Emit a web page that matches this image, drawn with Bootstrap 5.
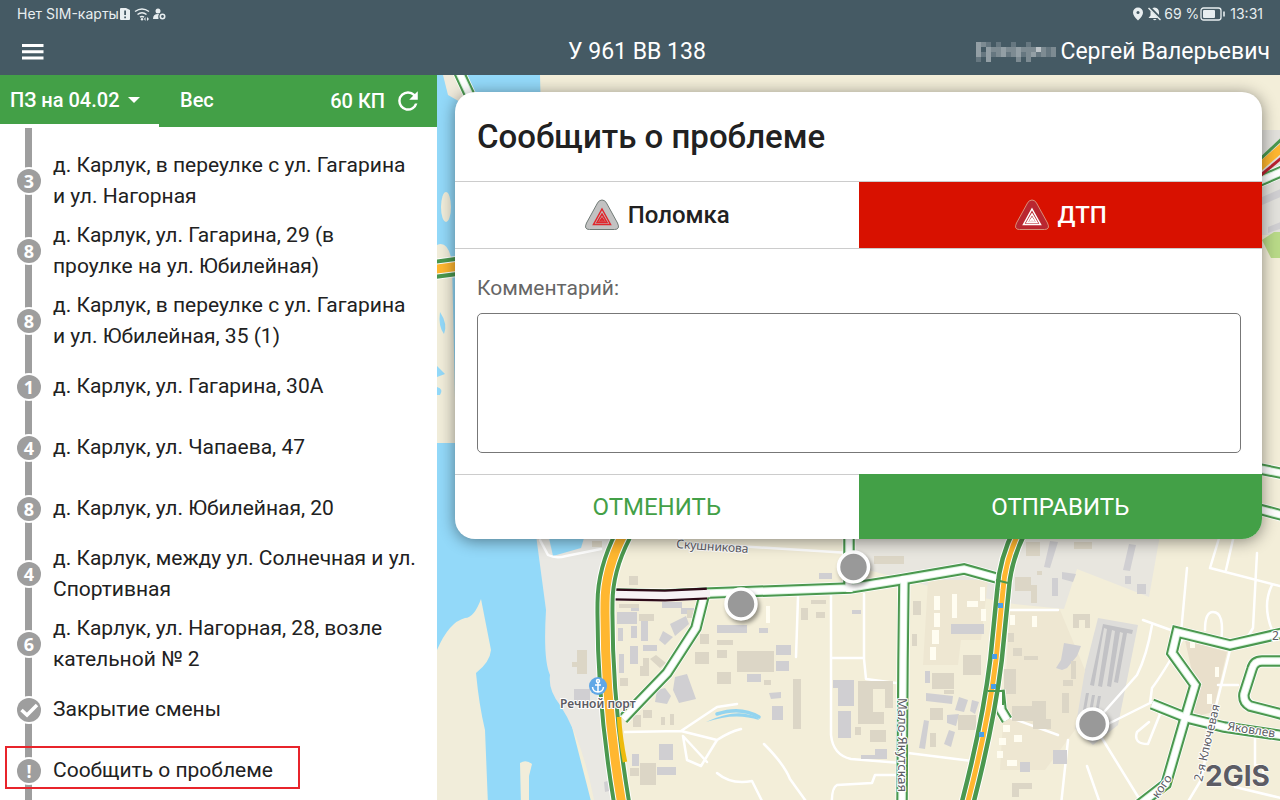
<!DOCTYPE html>
<html lang="ru">
<head>
<meta charset="utf-8">
<meta name="viewport" content="width=device-width, initial-scale=1">
<title>Сообщить о проблеме</title>
<link href="https://cdn.jsdelivr.net/npm/bootstrap@5.3.0/dist/css/bootstrap.min.css" rel="stylesheet">
<style>
  :root { --slate: #455a64; --leaf: #43a047; --rail: #9e9e9e; --alarm: #d81100; }
  body { font-family: Roboto, sans-serif; color: #212121; }
  button { border: 0; background: none; color: inherit; padding: 0; }
  .topbar { background: var(--slate); color: #fff; padding-bottom: 4px; }
  .statusline { font: 14px/20px Inter, sans-serif; color: #e8eef0; padding: 4px 17px; }
  .titleline { padding: 8px 10px 4px 4px; font-size: 23px; line-height: 31px; }
  .menu-button { margin-left: 18px; }
  .side-part { flex: 1 1 0; }
  .route { width: 437px; }
  .route-tabs { background: var(--leaf); height: 52px; font-size: 20px; }
  .route-tabs .chosen { width: 159px; border-bottom: 3px solid #fff; padding-left: 10px; }
  .weight-tab { padding: 0 21px 3px; }
  .point-count { padding-right: 18px; }
  .caret-mark { border: 6px solid transparent; border-top-color: #fff; border-bottom: 0; }
  .stops { font-size: 21px; line-height: 31px; }
  .stop-row { min-height: 61px; padding: 4px 8px 4px 17px;
    background: linear-gradient(var(--rail), var(--rail)) 25px 0 / 7px 100% no-repeat; }
  .stop-row.cut { min-height: 19px; padding: 0; border-top: 1px solid #fff; }
  .node { width: 24px; height: 24px; background: var(--rail); color: #fff; font: 700 18px/24px "Open Sans", sans-serif; box-shadow: 0 0 0 2px #fff; }
  .marker-frame { position: absolute; inset: 6px auto auto 5px; width: 295px; height: 43px; border: 2px solid #e8242b; pointer-events: none; }
  .map-area { background: #f3eed9; }
  .map-art { position: absolute; inset: 0; width: 100%; height: 100%; }
  .problem { margin: 17px 18px 0; border-radius: 20px; background: #fff; box-shadow: 0 2px 16px rgba(0, 0, 0, .45); overflow: hidden; }
  .problem h1 { font-size: 33px; line-height: 40px; padding: 25px 22px 24px; }
  .kinds { height: 68px; border: solid #ccc; border-width: 1px 0; font-size: 24px; }
  .kinds .danger-kind { background: var(--alarm); color: #fff; }
  .note { padding: 24px 21px 21px 22px; }
  .note label { font-size: 21px; line-height: 31px; color: #666; }
  .note textarea { height: 140px; border: 1px solid #777; border-radius: 5px; resize: none; margin-top: 9px; }
  .choices { height: 65px; font-size: 24px; }
  .choices .cancel { color: var(--leaf); border-top: 1px solid #ccc; }
  .choices .send { background: var(--leaf); color: #fff; }
  .map-art text { font-family: "Noto Sans", sans-serif; fill: #5c5c64; paint-order: stroke; stroke: #fff; stroke-width: 2px; stroke-linejoin: round; }
</style>
</head>
<body class="vh-100 overflow-hidden d-flex flex-column">

<header class="topbar">
  <div class="statusline d-flex align-items-center">
    <span>Нет SIM-карты</span>
    <svg width="48" height="16" viewBox="0 0 48 16" fill="#e8eef0" aria-hidden="true">
      <path d="M2 2h5l4 2v9q0 1-1 1H2q-1 0-1-1V3q0-1 1-1z"/><path d="M5.2 4.5h1.8v4.500H5.200zM5.200 10.500h1.800v1.800H5.200z" fill="#455a64"/>
      <g fill="none" stroke="#e8eef0" stroke-width="1.500"><path d="M16 5.500q7-5 14 0M18.500 8.500q4.500-3.500 9 0M21 11.200q2-1.500 4 0"/></g>
      <circle cx="23" cy="13.300" r="1.200"/><path d="M26.500 11v4l-1.500-2zM28 11v4l2-2z"/>
      <circle cx="39" cy="5" r="2.500"/><path d="M34 13q0-5 5-5l1 0q-1.500 2-.5 5z"/><circle cx="43.500" cy="10.500" r="2.200" fill="none" stroke="#e8eef0" stroke-width="1.600"/>
    </svg>
    <span class="ms-auto d-flex align-items-center">
      <svg width="32" height="16" viewBox="0 0 32 16" aria-hidden="true">
        <path d="M6 1.500a5 5 0 0 1 5 5q0 3.500-5 8-5-4.500-5-8a5 5 0 0 1 5-5z" fill="#e8eef0"/><circle cx="6" cy="6.500" r="1.500" fill="#455a64"/>
        <path d="M22.500 1.500q4.500.5 4.500 5v3l2 2.500H16.500l2-2.500v-3q0-4.500 4-5zM21 13h3.500q-1.700 2.500-3.500 0z" fill="#e8eef0"/>
        <path d="M17 1l12 12" stroke="#455a64" stroke-width="3"/><path d="M16.500 2l12 12" stroke="#e8eef0" stroke-width="1.400"/>
      </svg>
      <span>69 %</span>
      <svg class="me-1" width="27" height="14" viewBox="-1 0 27 14" aria-hidden="true">
        <rect x="1" y="1" width="20" height="12" rx="2.500" fill="none" stroke="#e8eef0" stroke-width="1.300"/><rect x="3" y="3" width="12" height="8" rx="1" fill="#e8eef0"/><path d="M24 4.500v5" stroke="#e8eef0" stroke-width="1.600"/>
      </svg>
      <span>13:31</span>
    </span>
  </div>
  <div class="titleline d-flex align-items-center">
    <div class="side-part d-flex">
      <button type="button" class="menu-button d-flex" aria-label="Меню">
        <svg width="22" height="16" viewBox="0 0 22 16" fill="#fff"><path d="M0 0h21.500v3H0zM0 6.200h21.500v3H0zM0 12.400h21.500v3H0z"/></svg>
      </button>
    </div>
    <div>У 961 ВВ 138</div>
    <div class="side-part d-flex justify-content-end align-items-center gap-1">
      <svg width="80" height="20" viewBox="0 0 16 4" shape-rendering="crispEdges" fill="#fff" aria-hidden="true">
        <g fill-opacity=".42"><path d="M0 0h1v3H0zM8 1h1v2H8zM5 1h1v2H5zM2 1h1v3H2zM11 2h1v1h-1z"/></g>
        <g fill-opacity=".3"><path d="M1 0h1v1H1zM3 1h2v1H3zM4 2h1v1H4zM6 1h2v1H6zM7 2h1v1H7zM8 3h1v1H8zM9 1h2v1H9zM10 2h1v2h-1zM11 1h1v1h-1zM13 1h1v2h-1zM15 1h1v2h-1z"/></g>
        <path fill-opacity=".65" d="M12 1h1v1h-1z"/>
        <path fill-opacity=".18" d="M2 0h1v1H2zM4 0h1v1H4zM7 0h1v1H7zM10 0h1v1h-1zM1 2h1v1H1zM3 2h1v1H3zM6 2h1v1H6zM9 2h1v1H9zM12 2h1v1h-1zM14 1h1v2h-1zM0 3h1v1H0z"/>
      </svg>
      <span>Сергей Валерьевич</span>
    </div>
  </div>
</header>

<main class="d-flex flex-grow-1 overflow-hidden">
  <section class="route flex-shrink-0 bg-white d-flex flex-column overflow-hidden">
    <div class="route-tabs flex-shrink-0 d-flex text-white fw-medium">
      <button type="button" class="chosen fw-medium d-flex align-items-center gap-2">ПЗ на 04.02 <span class="caret-mark"></span></button>
      <button type="button" class="weight-tab fw-medium">Вес</button>
      <span class="point-count ms-auto d-flex align-items-center gap-2">60 КП
        <button type="button" class="d-flex ms-1" aria-label="Обновить">
          <svg width="22" height="22" viewBox="3 3 18 18" fill="#fff"><path d="M17.650 6.350A7.960 7.960 0 0 0 12 4a8 8 0 1 0 7.730 10h-2.080A6 6 0 1 1 12 6c1.660 0 3.140.69 4.220 1.780L13 11h7V4z"/></svg>
        </button>
      </span>
    </div>
    <ul class="stops list-unstyled mb-0">
      <li class="stop-row cut"></li>
      <li class="stop-row d-flex align-items-center gap-2"><span class="node rounded-circle flex-shrink-0 text-center">3</span><span class="ps-1">д. Карлук, в переулке с ул. Гагарина<br>и ул. Нагорная</span></li>
      <li class="stop-row d-flex align-items-center gap-2"><span class="node rounded-circle flex-shrink-0 text-center">8</span><span class="ps-1">д. Карлук, ул. Гагарина, 29 (в<br>проулке на ул. Юбилейная)</span></li>
      <li class="stop-row d-flex align-items-center gap-2"><span class="node rounded-circle flex-shrink-0 text-center">8</span><span class="ps-1">д. Карлук, в переулке с ул. Гагарина<br>и ул. Юбилейная, 35 (1)</span></li>
      <li class="stop-row d-flex align-items-center gap-2"><span class="node rounded-circle flex-shrink-0 text-center">1</span><span class="ps-1">д. Карлук, ул. Гагарина, 30А</span></li>
      <li class="stop-row d-flex align-items-center gap-2"><span class="node rounded-circle flex-shrink-0 text-center">4</span><span class="ps-1">д. Карлук, ул. Чапаева, 47</span></li>
      <li class="stop-row d-flex align-items-center gap-2"><span class="node rounded-circle flex-shrink-0 text-center">8</span><span class="ps-1">д. Карлук, ул. Юбилейная, 20</span></li>
      <li class="stop-row d-flex align-items-center gap-2"><span class="node rounded-circle flex-shrink-0 text-center">4</span><span class="ps-1">д. Карлук, между ул. Солнечная и ул. Спортивная</span></li>
      <li class="stop-row d-flex align-items-center gap-2"><span class="node rounded-circle flex-shrink-0 text-center">6</span><span class="ps-1">д. Карлук, ул. Нагорная, 28, возле<br>кательной № 2</span></li>
      <li class="stop-row d-flex align-items-center gap-2"><span class="node rounded-circle flex-shrink-0 d-flex"><svg width="24" height="24" viewBox="0 0 24 24" fill="none" stroke="#fff" stroke-width="3.500" aria-hidden="true"><path d="M4.500 12l5.500 5L20 7"/></svg></span><span class="ps-1">Закрытие смены</span></li>
      <li class="stop-row d-flex align-items-center gap-2 position-relative"><span class="node rounded-circle flex-shrink-0 text-center">!</span><span class="ps-1">Сообщить о проблеме</span><span class="marker-frame"></span></li>
    </ul>
  </section>

  <section class="map-area flex-grow-1 position-relative overflow-hidden">
    <svg class="map-art" viewBox="437 75 843 725" preserveAspectRatio="xMinYMin slice" role="img" aria-label="Карта">
      <defs>
        <g id="jam" fill="none">
          <path d="M612 594L665 595 710 593 850 588 900 580 964 569 1000 579"/>
          <path d="M705 592L696 628 667 673 640 701 623 719"/>
          <path d="M904 576L903 660 902 805"/>
          <path d="M849 535V592"/>
          <path d="M1283 633L1230 645 1177 632 1172 653 1195 685 1184 722 1166 784 1135 808"/>
          <path d="M1152 704L1187 718 1224 727 1285 736"/>
          <path d="M1285 661H1262Q1254 661 1252 669L1244 694Q1243 702 1250 706L1285 715"/>
          <path d="M458 70L472 100M1255 183L1285 170M1255 468L1285 474M1255 508L1285 516"/>
          <path d="M999 690l2 20 6 10"/>
        </g>
        <g id="avenue" fill="none">
          <path d="M623 535Q605 570 605 603 604 700 622 805"/>
          <path d="M430 270L460 266"/>
        </g>
        <path id="avenue-east" fill="none" d="M1020 530Q1005 560 1003 590L996 660Q988 725 967 805"/>
      </defs>
      <path d="M437 75H540L551 540 560 680 592 805H437z" fill="#93d9f9"/>
      <path d="M437 245Q448 240 452 262L456 443H437z" fill="#f1edda"/>
      <path d="M443 75h24l-5 28-14-8z" fill="#efeadb"/>
      <ellipse cx="446" cy="207" rx="5" ry="15" fill="#f1edda"/>
      <path d="M440 312q8 12 4 22-6-8-4-22zM437 366l8 8-8 3zM437 387q7 2 3 8h-3z" fill="#93d9f9"/>
      <path d="M536 535h90l-18 70v100l18 100h-31Q583 740 560 705 548 690 550 675 543 660 546 610z" fill="#e9e8e3"/>
      <path d="M549 538h35l-3 10-28 8z" fill="#93d9f9"/>
      <path d="M437 650Q449 622 465 618 474 618 481 599L491 650Q490 662 476 673 479 705 485 730L488 805H437zM520 763q6-4 12 1l-3 12v30h-8z" fill="#f1edda"/>
      <path d="M850 535h310l-11 62-72-28-13 40-50-5-70-14-95-25z" fill="#e8e6df"/>
      <path d="M1098 618l40 7-20 100-25 20-22-20z" fill="#deddda"/>
      <path d="M1185 640l42 12-14 60-30 8 12-35z" fill="#e9dfcb"/>
      <path d="M928 580h60l-7 60h-20l-3 25h-35zM1010 610h50l25 60-10 60-30 40h-45z" fill="#eee7d2"/>
      <path d="M1255 130h30v105h-30z" fill="#e2e1dc"/>
      <path d="M1262 240l12-8h12v26h-15z" fill="#b9da88"/>

      <g fill="none" stroke="#fff" stroke-width="2.500" stroke-linecap="round" stroke-linejoin="round">
        <path d="M540 540l8 15q8 4 18 1l35-7M625 732l56-1 36-24 20-3M681 731l36 9-16 26-14-6-4-24 24 26M717 740q12-8 24-11"/>
        <path d="M798 597l-2 60M831 595v140q2 20 20 24l50 4M864 594v65l2 20 30 4M831 658h33M900 775h-25l-3 8-35 2q-6 3-5 22M764 744q20 20 26 35l18 25M717 773q14 12 35 8l12 24"/>
        <path d="M1010 610h48M1003 715l55 20M1068 740l-7 65M1087 766l14 40M1143 620l36 13M1152 625q-5 30-15 50-24 27-40 45M1187 568l-6 65M1182 640q-20 35-30 48l-2 15-50 25M1100 735l40 65M1152 702l8 12-12 30q-15 0-11-12l12-10M1220 535l-10 33 70 18M1234 535l-8 35M1257 553l-4 75-12 20M1272 585q-10 20 0 45M1205 630q0-18 8-18 12 0 8 30M1230 650l-15 60-14 70-15 25M1218 685h20M1255 735v30q12 0 7 15M1235 787l50 12"/>
        <path d="M720 545l130 8M908 753l64 8"/>
      </g>
      <path d="M706 722q24-11 40-8 12 2 13 6-24-8-53 2z" fill="#93d4ef"/>
      <path d="M717 714q24-8 42 3" fill="none" stroke="#93d4ef" stroke-width="3.500" stroke-linecap="round"/>

      <g fill="#d0cfd2">
        <path d="M617 612h20v12h-20zM631 606h8v5h-8zM662 602h20v6h-20zM681 608h13v6h-13zM618 628h5v13h-5zM631 626h6v12h-6zM641 620h7v21h-7zM619 654h5v19h-5zM630 646h8v18h-8zM643 645h14v6h-14zM670 624l16-8 3 8-14 12zM663 631l10 6-8 8-6-5zM574 689h16v14h-16z"/>
        <path d="M675 677l12-3 9 25-17 4-6-13zM657 690l8-2 6 8-4 8-12-2zM659 744h14v16h-14zM657 767h19v8h-19zM632 754h7v12h-7zM604 782l7-2 2 10-8 2z"/>
        <path d="M717 625h30v8h-30zM759 628h9v5h-9zM776 645h15v10h-15zM776 661h13v10h-13zM747 674h14v8h-14zM769 693l12-1v6l-10 1zM772 706h11v14h-11zM833 680h21v26h-16v-18h-5zM838 711h13v27h-13zM852 610h9v4h-9zM819 573h13v6h-13zM861 755h14v-6h12v10h-26z"/>
        <path d="M951 624h33v10h-33zM925 671h5v12h-5zM926 693l27 3-1 8-26-3zM959 697l9 3-4 12-9-2zM972 700l7 2-4 12-5-3zM947 715l12-1-3 12-9-3zM949 730l6 2-4 15-7-3zM924 720l5 1-4 28-6-1zM1064 643l17 3-4 10-10 12-5 2-6-2 5-8zM1053 750h14v14h-14zM1020 762h10v10h-10zM1050 541l8 1-8 26-6-1zM1129 544l7 1-6 26-7-1zM1052 578h6v18h-6zM1062 572l14 2-3 8-11-3zM1125 576h6v8h-6zM1137 584h9v10h-9z"/>
        <path d="M1255 200l28-12v8l-28 12zM1268 227l15-6v7l-15 5z"/>
      </g>
      <g fill="#c2c2c5">
        <path d="M1103 624l30 6-1 4-5-1-9 50-4-1 9-49-3-1-9 55-4-1 8-55-3-1-10 57-4-1 9-57-3-1-10 58-4-1zM1086 693h3l-3 17h-3zM1092 695h3l-3 17h-3zM1098 696h3l-3 17h-3z"/>
      </g>
      <g fill="#dcd6c6">
        <path d="M577 650h10v24h-10zM572 662h5v5h-5zM629 576h9v9h-9zM619 604h20v4h-20zM639 614h15v7h-15zM687 610h12v8h-12zM643 658h6v18h-6zM650 659l6-4 10 8-6 5zM620 678h8v8h-8zM640 666h8v10h-8zM643 710h9v8h-9zM633 715h8v12h-8zM661 717h4v8h-4zM670 714h4v11h-4zM630 768h9v8h-9zM640 763h16v22h-16zM695 652h14v12h-14zM700 634h9v10h-9zM592 541h10v6h-10z"/>
        <path d="M737 651h37v21h-37zM793 679h8v50h-8zM717 640h16v5h-16zM717 650h10v8h-10zM717 672h14v12h-14zM764 680h7v5h-7zM801 608h7v12h-7zM811 600h15v4h-15zM816 612h9v6h-9zM858 681h35v27h-8v-19h-12v23h11v12h-26zM870 730h16v12h-16zM855 727h6v8h-6zM874 556h30v8h-30zM913 601h8v14h-8zM912 634h5v12h-5z"/>
        <path d="M932 673h22v16h-22zM930 708h13v12h-13zM958 715h18v15h-18zM963 655h18v20h-18zM930 733h6v14h-6zM944 690h10v4h-10zM1004 669h12v25h-12zM1008 633h6v9h-6zM1013 648h9v8h-9zM1024 656h14v4h-14zM1073 614h17v14h-5v-8h-6v8h-6zM1026 542h14v14h-14zM1015 577h16v8h6v18h-6v-12h-16zM1071 661h5v18h-5zM1063 680h10v6h-10zM1062 693h7v20h-7zM1012 706h20v-5h14v18h5v10h-18v-8h-21zM1012 783h20v6h-13v8h-7zM1074 542h18v7h-18zM1037 571h5v4h-5z"/>
      </g>
      <g fill="#fffdf1">
        <path d="M934 596h6v14h-6zM934 613h6v14h-6zM932 630h7v14h-7zM930 647h6v13h-6zM952 594h5v24h-5zM967 601h11v6h-11zM980 587h5v14h-5zM981 609h5v12h-5zM766 606h4v17h-4zM1010 615h5v10h-5zM1032 616h5v11h-5zM1003 725h7v7h-7zM1014 735h8v7h-8zM999 738h7v7h-7zM997 751h6v7h-6zM1007 760h10v6h-10zM1190 640h5v8h-5zM1215 667h4v10h-4zM1207 694h5v10h-5z"/>
      </g>

      <use href="#jam" stroke="#fff" stroke-width="13"/>
      <use href="#jam" stroke="#4b984f" stroke-width="11.500"/>
      <use href="#jam" stroke="#d9f3de" stroke-width="7.500"/>
      <use href="#jam" stroke="#fff" stroke-width="5.500"/>
      <path d="M612 594.500L665 595.500 707 593.500" fill="none" stroke="#2e0a18" stroke-width="12"/>
      <path d="M612 594.500L665 595.500 710 593.500" fill="none" stroke="#f7f2f5" stroke-width="7.500"/>
      <use href="#avenue" stroke="#fff" stroke-width="21"/>
      <use href="#avenue" stroke="#4b984f" stroke-width="19"/>
      <use href="#avenue" stroke="#fff" stroke-width="11"/>
      <use href="#avenue" stroke="#ffb730" stroke-width="9"/>
      <use href="#avenue-east" stroke="#fff" stroke-width="18"/>
      <use href="#avenue-east" stroke="#4b984f" stroke-width="16"/>
      <use href="#avenue-east" stroke="#fff" stroke-width="7"/>
      <use href="#avenue-east" stroke="#ffb730" stroke-width="5"/>
      <path d="M619 717q1 20 6 45" fill="none" stroke="#eebb0c" stroke-width="4.500"/>
      <path d="M988 691h15v14M996 580l12 3" fill="none" stroke="#4b984f" stroke-width="2"/>
      <path d="M1255 164L1285 136" stroke="#4b984f" stroke-width="3"/>
      <path d="M1255 171L1285 145" stroke="#ffb730" stroke-width="8"/>
      <path d="M1255 180L1285 155" stroke="#b9202f" stroke-width="3"/>
      <g fill="#4a9fe8"><path d="M998 603h5v5h-5zM992 654h5v5h-5zM991 684h5v5h-5zM979 732h5v5h-5z"/></g>

      <g stroke="#fff" stroke-width="3.500" fill="#999" style="filter: drop-shadow(2px 3px 2px rgba(0,0,0,.4))">
        <circle cx="853.500" cy="567" r="15"/><circle cx="741" cy="604" r="15"/><circle cx="1092.500" cy="724" r="15"/>
      </g>
      <circle cx="598" cy="686" r="9" fill="#60a7e6"/>
      <g fill="none" stroke="#fff" stroke-width="1.500"><circle cx="598" cy="681" r="1.500"/><path d="M598 683v9M595 685h6M592.500 687q.5 5 5.500 5t5.500-5"/></g>
      <text x="560" y="708" font-size="12" font-weight="600">Речной порт</text>
      <text transform="translate(676 548) rotate(4)" font-size="12">Скушникова</text>
      <text transform="translate(898 698) rotate(90)" font-size="13">Мало-Якутская</text>
      <text transform="translate(1202 782) rotate(-77)" font-size="12">2-я Ключевая</text>
      <text transform="translate(1227 730) rotate(9)" font-size="12">Яковлев</text>
      <text transform="translate(1158 799) rotate(-55)" font-size="12">кого</text>
      <text x="1272" y="640" font-size="12">2</text>
      <text x="1205" y="786" font-size="28" style="font-family: Inter, sans-serif; font-weight: 700; stroke-width: 1px">2GIS</text>
    </svg>

    <form class="problem position-relative">
      <h1 class="mb-0 fw-medium">Сообщить о проблеме</h1>
      <div class="kinds row g-0">
        <button type="button" class="col-6 fw-medium d-flex align-items-center justify-content-center gap-2">
          <svg width="36" height="32" viewBox="0 0 36 32" aria-hidden="true"><path d="M18 1q3 0 4.500 3L33.500 24q3 6.500-3 6.500H5.500q-6 0-3-6.500L13.500 4Q15 1 18 1z" fill="#c2c2c2" stroke="#707a76"/><g fill="none" stroke="#e0262c" stroke-width="1.500"><path d="M18 10l8.500 15.500h-17z"/><path d="M18 15l5 8.500H13z"/><path d="M18 19l2 3h-4z"/></g></svg>
          Поломка</button>
        <button type="button" class="col-6 danger-kind fw-medium d-flex align-items-center justify-content-center gap-2">
          <svg width="36" height="32" viewBox="0 0 36 32" aria-hidden="true"><path d="M18 1q3 0 4.500 3L33.500 24q3 6.500-3 6.500H5.500q-6 0-3-6.500L13.500 4Q15 1 18 1z" fill="#b92630" stroke="#d98f78"/><g fill="none" stroke="#fff" stroke-width="1.500"><path d="M18 10l8.500 15.500h-17z"/><path d="M18 15l5 8.500H13z"/><path d="M18 19l2 3h-4z"/></g></svg>
          ДТП</button>
      </div>
      <div class="note d-flex flex-column">
        <label for="comment">Комментарий:</label>
        <textarea id="comment" class="w-100"></textarea>
      </div>
      <div class="choices row g-0">
        <button type="button" class="cancel col-6">ОТМЕНИТЬ</button>
        <button type="submit" class="send col-6">ОТПРАВИТЬ</button>
      </div>
    </form>
  </section>
</main>
<script src="https://cdn.jsdelivr.net/npm/bootstrap@5.3.0/dist/js/bootstrap.bundle.min.js"></script>
</body>
</html>
